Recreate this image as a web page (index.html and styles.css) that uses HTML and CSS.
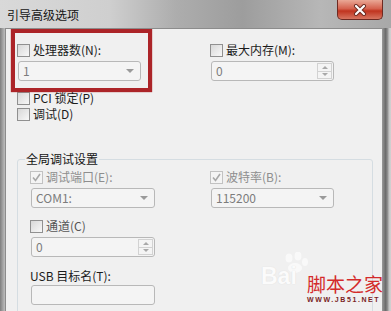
FILE: index.html
```html
<!DOCTYPE html>
<html>
<head>
  <meta charset="UTF-8">
  <meta name="viewport" content="width=device-width, initial-scale=1.0">
  <title>引导高级选项</title>
  <link rel="stylesheet" href="styles.css">
</head>
<body>
  <div class="window">
    <div class="titlebar">
      <span class="caption">引导高级选项</span>
      <span class="close">
        <svg width="14" height="12" viewBox="0 0 14 12">
          <path d="M3 2 L11 10 M11 2 L3 10" stroke="#6a2a20" stroke-width="4" stroke-linecap="round"/>
          <path d="M3 2 L11 10 M11 2 L3 10" stroke="#fff" stroke-width="2.2" stroke-linecap="round"/>
        </svg>
      </span>
    </div>

    <div class="frame">
      <div class="side"></div>
      <div class="client">
        <div class="mark"></div>

        <div class="cols">
          <div class="field">
            <label class="check"><span class="box"></span>处理器数(N):</label>
            <div class="input off"><span>1</span><i class="arrow"></i></div>
          </div>
          <div class="field">
            <label class="check"><span class="box"></span>最大内存(M):</label>
            <div class="input off"><span>0</span>
              <i class="spin"><b class="up"></b><b class="down"></b></i>
            </div>
          </div>
        </div>

        <label class="check opt"><span class="box"></span>PCI 锁定(P)</label>
        <label class="check opt2"><span class="box"></span>调试(D)</label>

        <div class="group">
          <div class="legend">全局调试设置</div>
          <div class="cols inner">
            <div class="field">
              <label class="check dim"><span class="box on"></span>调试端口(E):</label>
              <div class="input off"><span>COM1:</span><i class="arrow"></i></div>
            </div>
            <div class="field">
              <label class="check dim"><span class="box on"></span>波特率(B):</label>
              <div class="input off"><span>115200</span><i class="arrow"></i></div>
            </div>
          </div>
          <div class="field narrow gap-lg">
            <label class="check soft"><span class="box"></span>通道(C)</label>
            <div class="input off"><span>0</span>
              <i class="spin"><b class="up"></b><b class="down"></b></i>
            </div>
          </div>
          <div class="field narrow tight">
            <span class="label">USB 目标名(T):</span>
            <div class="input off"></div>
          </div>
        </div>
      </div>
      <div class="side right"></div>
    </div>
  </div>

  <div class="baidu">
    <svg width="34" height="22" viewBox="0 0 34 22">
      <ellipse cx="10" cy="6" rx="3.5" ry="4.5" fill="#fff" opacity="0.8"/>
      <ellipse cx="19" cy="4" rx="3.5" ry="4.5" fill="#fff" opacity="0.8"/>
      <ellipse cx="26" cy="10" rx="3" ry="4" fill="#fff" opacity="0.8"/>
      <ellipse cx="16" cy="16" rx="7" ry="5" fill="#fff" opacity="0.8"/>
    </svg>
    <span>Bai</span>
  </div>
  <div class="site">
    <span class="cn">脚本之家</span>
    <span class="url">WWW.JB51.NET</span>
  </div>
</body>
</html>
```

FILE: styles.css
```css
* {
  padding: 0;
  margin: 0;
  box-sizing: border-box;
}
body {
  width: 391px;
  height: 311px;
  overflow: hidden;
  position: relative;
  font: 12px/14px "Noto Sans CJK SC", "Liberation Sans", sans-serif;
  color: #1c1c1c;
  background: #c4c4c4;
}
.window {
  height: 311px;
  display: flex;
  flex-direction: column;
}
.titlebar {
  height: 28px;
  flex: none;
  display: flex;
  justify-content: space-between;
  align-items: flex-start;
  background: linear-gradient(90deg, #d9d9d9 0, #cfcfcf 28%, #adadad 45%, #9d9d9d 62%, #b7b7b7 82%, #a8a8a8 100%);
}
.caption {
  margin: 8px 0 0 7px;
  color: #141414;
}
.close {
  width: 46px;
  height: 20px;
  margin-right: 8px;
  border: 1px solid #6e2a22;
  border-top: 0;
  border-radius: 0 0 5px 5px;
  background: linear-gradient(#eaa896, #d5624e 45%, #c0341f 58%, #d77560);
  display: flex;
  align-items: center;
  justify-content: center;
}
.frame {
  flex: 1;
  display: flex;
  min-height: 0;
}
.side {
  width: 5px;
  background: linear-gradient(90deg, #7e7e7e, #a6a6a6 60%, #bdbdbd);
}
.side.right {
  width: 9px;
  background: linear-gradient(90deg, #9a9a9a 0, #6c6c6c 40%, #8c8c8c 60%, #c6c6c6 80%, #d2d2d2);
}
.client {
  flex: 1;
  position: relative;
  overflow: hidden;
  background: #f0f0f0;
  border-top: 1px solid #8c8c8c;
  border-left: 1px solid #8c8c8c;
  padding: 14px 0 0 11px;
}
.mark {
  position: absolute;
  left: 5px;
  top: 0;
  width: 141px;
  height: 63px;
  border: 4px solid #ac2428;
  box-shadow: 0 0 1px #ac2428;
}

.cols {
  display: grid;
  grid-template-columns: 124px 124px;
  column-gap: 69px;
}
.cols.inner {
  margin-top: 4px;
  grid-template-columns: 125px 124px;
  column-gap: 55px;
}
.field {
  display: flex;
  flex-direction: column;
  gap: 4px;
}
.field.narrow {
  width: 125px;
}
.field.gap-lg {
  margin-top: 11px;
}
.field.tight {
  margin-top: 12px;
  gap: 2px;
}
.check {
  display: flex;
  align-items: center;
  gap: 3px;
  height: 14px;
}
.check.opt {
  margin-top: 10px;
}
.check.opt2 {
  margin-top: 2px;
}
.check.dim {
  color: #8e8e8e;
}
.check.soft {
  color: #555;
}
.label {
  height: 14px;
}
.box {
  width: 13px;
  height: 13px;
  flex: none;
  border: 1px solid #909090;
  background: linear-gradient(135deg, #d8d8d8, #f8f8f8);
}
.box.on {
  border-color: #c2c2c2;
  background: #f4f4f4 url("data:image/svg+xml,%3Csvg xmlns='http://www.w3.org/2000/svg' width='11' height='11'%3E%3Cpath d='M2 5.5 L4.5 8.5 L9 2' fill='none' stroke='%23a8a8a8' stroke-width='1.6'/%3E%3C/svg%3E") center no-repeat;
}

.input {
  height: 20px;
  margin-left: 1px;
  border: 1px solid #b8b8b8;
  border-radius: 3px;
  background: #f4f4f4;
  display: flex;
  align-items: center;
  padding-left: 4px;
  color: #7c7c7c;
}
.arrow {
  margin-left: auto;
  margin-right: 6px;
  border-left: 4px solid transparent;
  border-right: 4px solid transparent;
  border-top: 4px solid #9a9a9a;
}
.spin {
  margin-left: auto;
  margin-right: 1px;
  width: 15px;
  height: 16px;
  display: flex;
  flex-direction: column;
  border: 1px solid #d2d2d2;
}
.spin b {
  flex: 1;
  display: flex;
  align-items: center;
  justify-content: center;
}
.spin b + b {
  border-top: 1px solid #d2d2d2;
}
.spin b::after {
  content: "";
  border-left: 3px solid transparent;
  border-right: 3px solid transparent;
}
.spin .up::after {
  border-bottom: 3px solid #a8a8a8;
}
.spin .down::after {
  border-top: 3px solid #a8a8a8;
}

.group {
  margin-top: 38px;
  width: 356px;
  height: 200px;
  border: 1px solid #d5dde2;
  border-radius: 3px;
  padding-left: 12px;
}
.legend {
  width: fit-content;
  margin: -8px 0 0 -5px;
  padding: 0 1px;
  background: #f0f0f0;
  color: #141414;
}

.baidu {
  position: absolute;
  left: 261px;
  top: 252px;
  width: 44px;
  height: 40px;
  opacity: 0.75;
}
.baidu svg {
  position: absolute;
  left: 18px;
  top: 0;
}
.baidu span {
  position: absolute;
  left: 0;
  top: 12px;
  font: bold 23px/24px "Liberation Sans", sans-serif;
  color: #fff;
  text-shadow: 0 0 1px #d0d0d0;
}
.site {
  position: absolute;
  right: 8px;
  top: 275px;
  display: flex;
  flex-direction: column;
  align-items: flex-start;
}
.cn {
  font-size: 19px;
  line-height: 18px;
  color: #d42b2b;
}
.url {
  margin-top: 3px;
  font: bold 7px/8px "Liberation Sans", sans-serif;
  letter-spacing: 1.6px;
  color: #7a1f1f;
}
```
